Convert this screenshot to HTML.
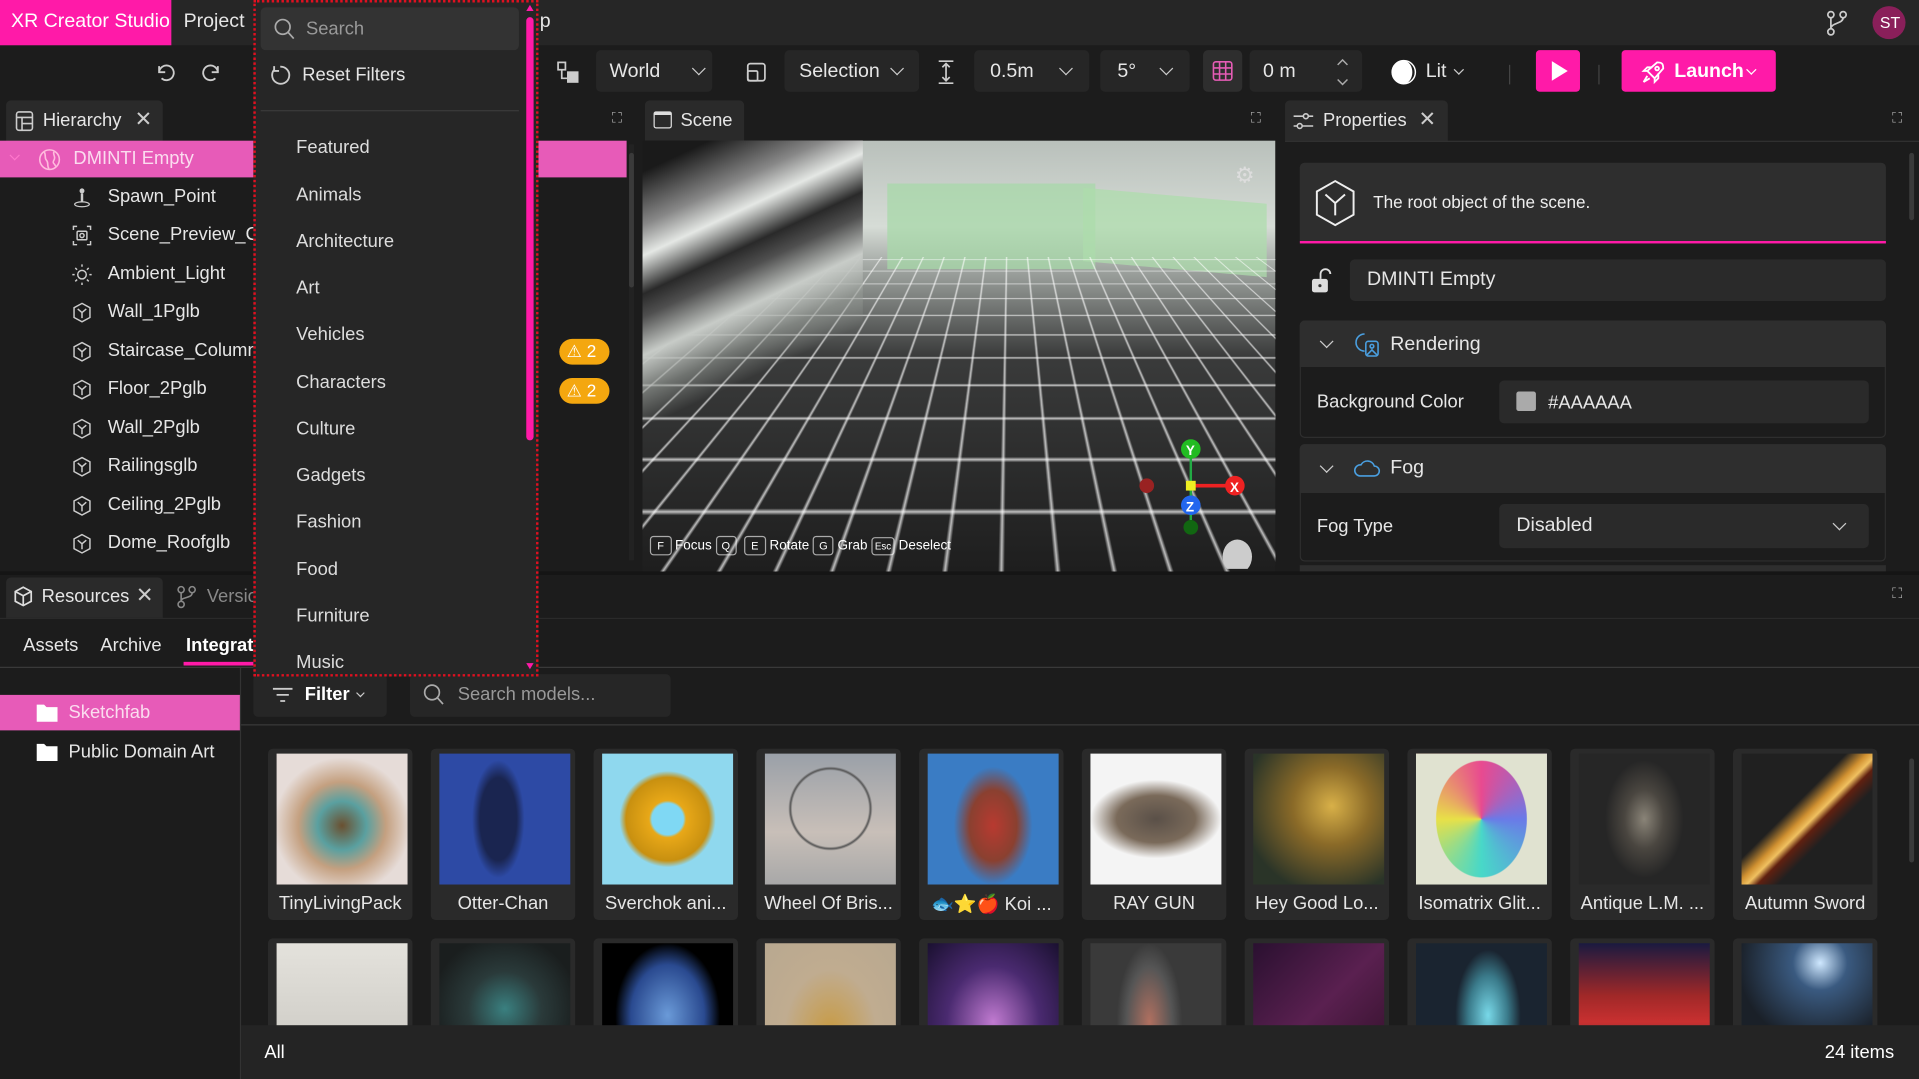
<!DOCTYPE html>
<html><head><meta charset="utf-8"><style>
*{box-sizing:border-box;margin:0;padding:0}
html,body{width:1919px;height:1079px;overflow:hidden;background:#1c1c1c}
#w{position:absolute;left:0;top:0;width:1568px;height:882px;transform:scale(1.22385,1.2234);transform-origin:0 0;font-family:"Liberation Sans",sans-serif;color:#e6e6e6;font-size:15px;background:#1c1c1c;overflow:hidden}
.a{position:absolute}
.box{position:absolute;background:#262626;border-radius:4px}
.t{position:absolute;white-space:nowrap}
.chev{position:absolute;width:8px;height:8px;border-right:1.5px solid #ccc;border-bottom:1.5px solid #ccc;transform:rotate(45deg)}
.row{position:absolute;left:0;height:31px;width:440px}
.row .t{left:88px;top:6px;font-size:15px}
.ic{position:absolute;left:59px;top:7px;width:16px;height:17px}
.card{position:absolute;width:118px;height:140px;background:#2a2a2a;border-radius:4px}
.card .img{position:absolute;left:7px;top:4px;width:107px;height:107px}
.card .t{left:0;width:118px;text-align:center;top:118px;font-size:15px}
.dd{position:absolute;left:242px;font-size:15px;color:#ddd}
</style></head><body><div id="w">
<div class="a" style="left:0;top:0;width:1568px;height:37px;background:#262626"></div>
<div class="a" style="left:0;top:0;width:140px;height:37px;background:#ff1aa8"></div>
<div class="t" style="left:9px;top:9px;font-size:16px;color:#fff">XR Creator Studio</div>
<div class="t" style="left:150px;top:9px;font-size:16px">Project</div>
<div class="t" style="left:441px;top:9px;font-size:16px">p</div>
<svg class="a" style="left:1491px;top:8px" width="20" height="22" viewBox="0 0 20 22" fill="none" stroke="#ccc" stroke-width="1.4"><circle cx="5" cy="4" r="2.5"/><circle cx="15" cy="4" r="2.5"/><circle cx="5" cy="18" r="2.5"/><path d="M5 6.5v9M15 6.5c0 5-10 4-10 9"/></svg>
<div class="a" style="left:1530px;top:5px;width:27px;height:27px;border-radius:50%;background:#8a1f5a"></div>
<div class="t" style="left:1536px;top:11px;font-size:13px;color:#fff">ST</div>
<svg class="a" style="left:126px;top:50px" width="60" height="18" fill="none" stroke="#ccc" stroke-width="1.5"><path d="M4 4v5h5M4 9a6 6 0 1 1 2 5"/><path d="M52 4v5h-5M52 9a6 6 0 1 0-2 5"/></svg>
<svg class="a" style="left:454px;top:49px" width="20" height="20" fill="none" stroke="#ccc" stroke-width="1.4"><rect x="2" y="2" width="6" height="6"/><rect x="10" y="10" width="8" height="8" fill="#ccc"/><path d="M5 8v7h5"/></svg>
<div class="box" style="left:487px;top:41px;width:95px;height:34px"></div><div class="t" style="left:498px;top:50px;font-size:16px">World</div><div class="chev" style="left:567px;top:52px"></div>
<svg class="a" style="left:608px;top:49px" width="20" height="20" fill="none" stroke="#ccc" stroke-width="1.4"><rect x="3" y="3" width="14" height="14" rx="2"/><rect x="3" y="9" width="8" height="8" rx="1"/></svg>
<div class="box" style="left:641px;top:41px;width:110px;height:34px"></div><div class="t" style="left:653px;top:50px;font-size:16px">Selection</div><div class="chev" style="left:729px;top:52px"></div>
<svg class="a" style="left:764px;top:48px" width="18" height="22" fill="none" stroke="#ccc" stroke-width="1.4"><path d="M3 2h12M3 20h12M9 4v14M6 7l3-3 3 3M6 15l3 3 3-3"/></svg>
<div class="box" style="left:796px;top:41px;width:94px;height:34px"></div><div class="t" style="left:809px;top:50px;font-size:16px">0.5m</div><div class="chev" style="left:867px;top:52px"></div>
<div class="box" style="left:899px;top:41px;width:73px;height:34px"></div><div class="t" style="left:913px;top:50px;font-size:16px">5°</div><div class="chev" style="left:949px;top:52px"></div>
<div class="box" style="left:983px;top:41px;width:32px;height:34px;background:#2e2e2e"></div>
<svg class="a" style="left:990px;top:49px" width="18" height="18" fill="none" stroke="#e55cb5" stroke-width="1.3"><rect x="1.5" y="1.5" width="15" height="15" rx="2"/><path d="M6.5 1.5v15M11.5 1.5v15M1.5 6.5h15M1.5 11.5h15"/></svg>
<div class="box" style="left:1021px;top:41px;width:92px;height:34px"></div><div class="t" style="left:1032px;top:50px;font-size:16px">0 m</div>
<svg class="a" style="left:1090px;top:46px" width="14" height="26" fill="none" stroke="#aaa" stroke-width="1.2"><path d="M3 7l4-4 4 4M3 19l4 4 4-4"/></svg>
<svg class="a" style="left:1136px;top:48px" width="22" height="22"><circle cx="11" cy="11" r="9.5" fill="#fff"/><path d="M11 1.5a9.5 9.5 0 0 1 0 19a7 9.5 0 0 0 0-19z" fill="#1c1c1c"/><circle cx="11" cy="11" r="9.5" fill="none" stroke="#fff" stroke-width="1.2"/></svg>
<div class="t" style="left:1165px;top:50px;font-size:16px">Lit</div><div class="chev" style="left:1189px;top:54px;width:6px;height:6px"></div>
<div class="a" style="left:1233px;top:53px;width:1px;height:16px;background:#444"></div>
<div class="a" style="left:1255px;top:41px;width:36px;height:34px;background:#ff1aa8;border-radius:3px"></div>
<svg class="a" style="left:1266px;top:49px" width="16" height="18"><path d="M2 1l13 8-13 8z" fill="#fff"/></svg>
<div class="a" style="left:1306px;top:53px;width:1px;height:16px;background:#444"></div>
<div class="a" style="left:1325px;top:41px;width:126px;height:34px;background:#ff1aa8;border-radius:3px"></div>
<svg class="a" style="left:1340px;top:48px" width="22" height="22" fill="none" stroke="#fff" stroke-width="1.5"><path d="M14 3c4 0 5 1 5 5l-7 8-6-6z"/><circle cx="14" cy="8" r="1.5"/><path d="M6 10l-3 0 3-3h4M12 16v3l3-3v-4M6 14l-3 5 5-3"/></svg>
<div class="t" style="left:1368px;top:50px;font-size:16px;color:#fff;font-weight:bold">Launch</div><div class="chev" style="left:1428px;top:54px;width:6px;height:6px;border-color:#fff"></div>
<div class="a" style="left:5px;top:82px;width:128px;height:33px;background:#2a2a2a;border-radius:4px 4px 0 0"></div>
<svg class="a" style="left:12px;top:90px" width="16" height="18" fill="none" stroke="#ccc" stroke-width="1.3"><rect x="1.5" y="1.5" width="13" height="15" rx="2"/><path d="M1.5 6h13M6 6v10.5M6 11h8.5"/></svg>
<div class="t" style="left:35px;top:90px;font-size:15px">Hierarchy</div>
<div class="t" style="left:110px;top:88px;font-size:17px;color:#ccc">✕</div>
<div class="t" style="left:500px;top:89px;font-size:12px;color:#aaa">⛶</div>
<div class="a" style="left:0;top:115px;width:512px;height:30px;background:#e75bb8"></div>
<div class="chev" style="left:9px;top:124px;width:6px;height:6px;border-color:#f7c"></div>
<svg class="a" style="left:31px;top:121px" width="19" height="19" fill="none" stroke="#fbd" stroke-width="1.3"><circle cx="9.5" cy="9.5" r="8"/><path d="M5 3c2 3 0 5 2 7s0 4 2 7M13 3c-1 3 2 4 0 7s2 3 1 5"/></svg>
<div class="t" style="left:60px;top:121px;font-size:15px;color:#fbdcef">DMINTI Empty</div>
<div class="row" style="top:146px"><svg class="ic" viewBox="0 0 16 17" fill="#ccc"><circle cx="8" cy="3" r="2"/><rect x="7" y="5" width="2" height="7"/><ellipse cx="8" cy="14" rx="6" ry="2" fill="none" stroke="#ccc"/></svg><div class="t">Spawn_Point</div></div>
<div class="row" style="top:177px"><svg class="ic" viewBox="0 0 16 17" fill="none" stroke="#ccc" stroke-width="1.2"><path d="M1 4V1h3M12 1h3v3M1 13v3h3M15 13v3h-3"/><rect x="4" y="5" width="8" height="7" rx="1"/><circle cx="8" cy="8.5" r="1.7"/></svg><div class="t">Scene_Preview_C</div></div>
<div class="row" style="top:209px"><svg class="ic" viewBox="0 0 16 17" fill="none" stroke="#ccc" stroke-width="1.2"><circle cx="8" cy="8.5" r="3.5"/><path d="M8 0v2M8 15v2M0 8.5h2M14 8.5h2M2.5 3l1.5 1.5M12 12.5l1.5 1.5M2.5 14l1.5-1.5M12 4.5l1.5-1.5"/></svg><div class="t">Ambient_Light</div></div>
<div class="row" style="top:240px"><svg class="ic" viewBox="0 0 16 17" fill="none" stroke="#ccc" stroke-width="1.2"><path d="M8 1l6.5 3.5v8L8 16l-6.5-3.5v-8z"/><path d="M4.5 5.5L8 8.5l3.5-3M8 8.5v4.5"/></svg><div class="t">Wall_1Pglb</div></div>
<div class="row" style="top:272px"><svg class="ic" viewBox="0 0 16 17" fill="none" stroke="#ccc" stroke-width="1.2"><path d="M8 1l6.5 3.5v8L8 16l-6.5-3.5v-8z"/><path d="M4.5 5.5L8 8.5l3.5-3M8 8.5v4.5"/></svg><div class="t">Staircase_Column</div></div>
<div class="row" style="top:303px"><svg class="ic" viewBox="0 0 16 17" fill="none" stroke="#ccc" stroke-width="1.2"><path d="M8 1l6.5 3.5v8L8 16l-6.5-3.5v-8z"/><path d="M4.5 5.5L8 8.5l3.5-3M8 8.5v4.5"/></svg><div class="t">Floor_2Pglb</div></div>
<div class="row" style="top:335px"><svg class="ic" viewBox="0 0 16 17" fill="none" stroke="#ccc" stroke-width="1.2"><path d="M8 1l6.5 3.5v8L8 16l-6.5-3.5v-8z"/><path d="M4.5 5.5L8 8.5l3.5-3M8 8.5v4.5"/></svg><div class="t">Wall_2Pglb</div></div>
<div class="row" style="top:366px"><svg class="ic" viewBox="0 0 16 17" fill="none" stroke="#ccc" stroke-width="1.2"><path d="M8 1l6.5 3.5v8L8 16l-6.5-3.5v-8z"/><path d="M4.5 5.5L8 8.5l3.5-3M8 8.5v4.5"/></svg><div class="t">Railingsglb</div></div>
<div class="row" style="top:398px"><svg class="ic" viewBox="0 0 16 17" fill="none" stroke="#ccc" stroke-width="1.2"><path d="M8 1l6.5 3.5v8L8 16l-6.5-3.5v-8z"/><path d="M4.5 5.5L8 8.5l3.5-3M8 8.5v4.5"/></svg><div class="t">Ceiling_2Pglb</div></div>
<div class="row" style="top:429px"><svg class="ic" viewBox="0 0 16 17" fill="none" stroke="#ccc" stroke-width="1.2"><path d="M8 1l6.5 3.5v8L8 16l-6.5-3.5v-8z"/><path d="M4.5 5.5L8 8.5l3.5-3M8 8.5v4.5"/></svg><div class="t">Dome_Roofglb</div></div>
<div class="a" style="left:514px;top:118px;width:4px;height:340px;background:#222"></div>
<div class="a" style="left:514px;top:125px;width:4px;height:110px;background:#3a3a3a;border-radius:2px"></div>
<div class="a" style="left:457px;top:277px;width:41px;height:21px;border-radius:11px;background:#f4a70f"></div><div class="t" style="left:463px;top:279px;font-size:14px;color:#fff">⚠ 2</div>
<div class="a" style="left:457px;top:309px;width:41px;height:21px;border-radius:11px;background:#f4a70f"></div><div class="t" style="left:463px;top:311px;font-size:14px;color:#fff">⚠ 2</div>
<div class="a" style="left:527px;top:82px;width:81px;height:33px;background:#2a2a2a;border-radius:4px 4px 0 0"></div>
<div class="a" style="left:534px;top:91px;width:15px;height:14px;border:1.5px solid #ddd;border-top-width:3px;border-radius:2px"></div>
<div class="t" style="left:556px;top:90px;font-size:15px">Scene</div>
<div class="t" style="left:1022px;top:89px;font-size:12px;color:#aaa">⛶</div>
<div class="a" style="left:525px;top:115px;width:517px;height:352px;overflow:hidden;background:linear-gradient(#b9c0bb 0%,#d6dcd6 20%,#9ea39f 30%,#3a3b3b 50%,#1e1e1e 100%)">
 <div class="a" style="left:200px;top:35px;width:170px;height:70px;background:#a7d8a8;opacity:.75"></div>
 <div class="a" style="left:360px;top:45px;width:150px;height:60px;background:#aedcac;transform:skewY(5deg);opacity:.75"></div>
 <div class="a" style="left:-400px;top:95px;width:1400px;height:600px;transform:perspective(260px) rotateX(60deg);transform-origin:50% 0;background-image:repeating-linear-gradient(90deg,rgba(255,255,255,.7) 0 1.3px,transparent 1.3px 17px),repeating-linear-gradient(0deg,rgba(255,255,255,.7) 0 1.3px,transparent 1.3px 17px)"></div>
 <div class="a" style="left:0;top:0;width:180px;height:230px;background:linear-gradient(155deg,#1a1a1a 8%,#888 22%,#e5e8e5 30%,#2a2a2a 40%,#505050 46%,#c8ccc8 56%,rgba(150,155,150,.6) 66%,transparent 75%)"></div>
 <div class="t" style="left:484px;top:18px;font-size:18px;color:#ddd">⚙</div>
 <svg class="a" style="left:400px;top:240px" width="100" height="110"><line x1="48" y1="42" x2="84" y2="42" stroke="#e22" stroke-width="3"/><line x1="48" y1="12" x2="48" y2="70" stroke="#2a4" stroke-width="2"/><circle cx="12" cy="42" r="6" fill="#922"/><circle cx="48" cy="12" r="8" fill="#2b2"/><circle cx="84" cy="42" r="8" fill="#e22"/><circle cx="48" cy="58" r="8" fill="#26e"/><circle cx="48" cy="76" r="6" fill="#161"/><rect x="44" y="38" width="8" height="8" fill="#ee2"/><text x="44" y="17" font-size="11" fill="#fff" font-family="Liberation Sans" font-weight="bold">Y</text><text x="80" y="47" font-size="11" fill="#fff" font-family="Liberation Sans" font-weight="bold">X</text><text x="44" y="63" font-size="11" fill="#fff" font-family="Liberation Sans" font-weight="bold">Z</text><ellipse cx="86" cy="100" rx="12" ry="14" fill="#ccc"/></svg>
 <div class="t" style="left:6px;top:325px;font-size:11px;color:#fff">
 <span style="border:1px solid #aaa;border-radius:3px;padding:2px 5px;font-size:9px">F</span> Focus <span style="border:1px solid #aaa;border-radius:3px;padding:2px 4px;font-size:9px">Q</span> &nbsp;<span style="border:1px solid #aaa;border-radius:3px;padding:2px 5px;font-size:9px">E</span> Rotate <span style="border:1px solid #aaa;border-radius:3px;padding:2px 4px;font-size:9px">G</span> Grab <span style="border:1px solid #aaa;border-radius:3px;padding:2px 2px;font-size:8px">Esc</span> Deselect</div>
</div>
<div class="a" style="left:1050px;top:82px;width:133px;height:33px;background:#2a2a2a;border-radius:4px 4px 0 0"></div>
<svg class="a" style="left:1056px;top:90px" width="18" height="18" fill="none" stroke="#ccc" stroke-width="1.3"><path d="M1 5h16M1 13h16"/><circle cx="11" cy="5" r="2" fill="#2a2a2a"/><circle cx="6" cy="13" r="2" fill="#2a2a2a"/></svg>
<div class="t" style="left:1081px;top:90px;font-size:15px">Properties</div>
<div class="t" style="left:1159px;top:88px;font-size:17px;color:#ccc">✕</div>
<div class="t" style="left:1546px;top:89px;font-size:12px;color:#aaa">⛶</div>
<div class="a" style="left:1050px;top:115px;width:518px;height:1px;background:#333"></div>
<div class="a" style="left:1062px;top:133px;width:479px;height:66px;background:#2e2e2e;border-radius:4px 4px 0 0;border-bottom:2px solid #ff1aa8"></div>
<svg class="a" style="left:1073px;top:146px" width="36" height="40" fill="none" stroke="#eee" stroke-width="1.6"><path d="M18 2l15 8.5v19L18 38 3 29.5v-19z"/><path d="M10 13l8 7 8-7M18 20v10"/></svg>
<div class="t" style="left:1122px;top:157px;font-size:14px;color:#eee">The root object of the scene.</div>
<svg class="a" style="left:1071px;top:219px" width="18" height="22"><path d="M8 9V5a4 4 0 0 1 8 0" fill="none" stroke="#ddd" stroke-width="1.5"/><rect x="1" y="9" width="13" height="11" rx="2" fill="#ddd"/><circle cx="7.5" cy="14.5" r="1.3" fill="#333"/></svg>
<div class="box" style="left:1103px;top:212px;width:438px;height:34px;background:#2a2a2a"></div>
<div class="t" style="left:1117px;top:220px;font-size:16px">DMINTI Empty</div>
<div class="a" style="left:1062px;top:262px;width:479px;height:96px;border:1px solid #2e2e2e;border-radius:4px"></div>
<div class="a" style="left:1062px;top:262px;width:479px;height:38px;background:#2e2e2e;border-radius:4px 4px 0 0"></div>
<div class="chev" style="left:1080px;top:275px"></div>
<svg class="a" style="left:1107px;top:271px" width="22" height="22" fill="none" stroke="#4a9fe0" stroke-width="1.3"><path d="M8 2a7 7 0 0 0 0 14"/><rect x="9" y="8" width="10" height="12" rx="2"/><circle cx="14" cy="12" r="1.5"/><path d="M10 19l4-4 4 4"/></svg>
<div class="t" style="left:1136px;top:273px;font-size:16px">Rendering</div>
<div class="t" style="left:1076px;top:320px;font-size:15px">Background Color</div>
<div class="box" style="left:1225px;top:311px;width:302px;height:35px;background:#2a2a2a"></div>
<div class="a" style="left:1239px;top:320px;width:16px;height:16px;background:#aaa;border-radius:2px"></div>
<div class="t" style="left:1265px;top:321px;font-size:15px">#AAAAAA</div>
<div class="a" style="left:1062px;top:363px;width:479px;height:96px;border:1px solid #2e2e2e;border-radius:4px"></div>
<div class="a" style="left:1062px;top:363px;width:479px;height:40px;background:#2e2e2e;border-radius:4px 4px 0 0"></div>
<div class="chev" style="left:1080px;top:377px"></div>
<svg class="a" style="left:1106px;top:373px" width="22" height="18" fill="none" stroke="#4a9fe0" stroke-width="1.3"><path d="M5 16h12a4 4 0 0 0 0-8 6 6 0 0 0-11-1 4.5 4.5 0 0 0-1 9z"/></svg>
<div class="t" style="left:1136px;top:374px;font-size:16px">Fog</div>
<div class="t" style="left:1076px;top:422px;font-size:15px">Fog Type</div>
<div class="box" style="left:1225px;top:412px;width:302px;height:36px;background:#2a2a2a"></div>
<div class="t" style="left:1239px;top:421px;font-size:16px">Disabled</div>
<div class="chev" style="left:1499px;top:424px"></div>
<div class="a" style="left:1062px;top:462px;width:479px;height:5px;background:#2e2e2e"></div>
<div class="a" style="left:1560px;top:125px;width:4px;height:55px;background:#3a3a3a;border-radius:2px"></div>
<div class="a" style="left:0;top:467px;width:1568px;height:3px;background:#151515"></div>
<div class="a" style="left:5px;top:472px;width:128px;height:33px;background:#2a2a2a;border-radius:4px 4px 0 0"></div>
<svg class="a" style="left:11px;top:479px" width="16" height="18" fill="none" stroke="#ddd" stroke-width="1.4"><path d="M8 1l6.5 3.5v8L8 16l-6.5-3.5v-8z"/><path d="M1.5 4.5L8 8l6.5-3.5M8 8v8"/></svg>
<div class="t" style="left:34px;top:479px;font-size:15px">Resources</div>
<div class="t" style="left:111px;top:477px;font-size:17px;color:#ccc">✕</div>
<svg class="a" style="left:144px;top:478px" width="18" height="20" fill="none" stroke="#888" stroke-width="1.3"><circle cx="4" cy="4" r="2.5"/><circle cx="13" cy="4" r="2.5"/><circle cx="4" cy="16" r="2.5"/><path d="M4 6.5v7M13 6.5c0 5-9 3-9 7"/></svg>
<div class="t" style="left:169px;top:479px;font-size:15px;color:#888">Versio</div>
<div class="t" style="left:1546px;top:478px;font-size:12px;color:#aaa">⛶</div>
<div class="a" style="left:0;top:505px;width:1568px;height:1px;background:#2a2a2a"></div>
<div class="t" style="left:19px;top:519px;font-size:15px">Assets</div>
<div class="t" style="left:82px;top:519px;font-size:15px">Archive</div>
<div class="t" style="left:152px;top:519px;font-size:15px;font-weight:bold;color:#fff">Integrations</div>
<div class="a" style="left:150px;top:541px;width:60px;height:3px;background:#ff1aa8"></div>
<div class="a" style="left:0;top:545px;width:1568px;height:1px;background:#3a3a3a"></div>
<div class="a" style="left:196px;top:546px;width:1px;height:336px;background:#333"></div>
<div class="a" style="left:0;top:568px;width:196px;height:29px;background:#e75bb8"></div>
<svg class="a" style="left:29px;top:574px" width="19" height="17"><path d="M1 2h6l2 2h9v12H1z" fill="#fff"/></svg>
<div class="t" style="left:56px;top:574px;font-size:15px;color:#fbdcef">Sketchfab</div>
<svg class="a" style="left:29px;top:606px" width="19" height="17"><path d="M1 2h6l2 2h9v12H1z" fill="#fff"/></svg>
<div class="t" style="left:56px;top:606px;font-size:15px">Public Domain Art</div>
<div class="box" style="left:207px;top:551px;width:109px;height:35px"></div>
<svg class="a" style="left:222px;top:561px" width="18" height="14" stroke="#ccc" stroke-width="1.5"><path d="M1 2h16M4 7h10M7 12h4"/></svg>
<div class="t" style="left:249px;top:559px;font-size:15px;font-weight:bold;color:#fff">Filter</div><div class="chev" style="left:292px;top:564px;width:5px;height:5px"></div>
<div class="box" style="left:335px;top:551px;width:213px;height:35px"></div>
<svg class="a" style="left:345px;top:558px" width="18" height="20" fill="none" stroke="#aaa" stroke-width="1.4"><circle cx="8" cy="8" r="6"/><path d="M12.5 12.5l4.5 5"/></svg>
<div class="t" style="left:374px;top:559px;font-size:15px;color:#999">Search models...</div>
<div class="a" style="left:197px;top:592px;width:1371px;height:1px;background:#3a3a3a"></div>
<div class="card" style="left:219px;top:612px"><div class="img" style="background:radial-gradient(circle at 50% 55%,#6a5030 0,#5aa0a0 25%,#c4a080 45%,#e6dcd8 70%)"></div><div class="t">TinyLivingPack</div></div>
<div class="card" style="left:352px;top:612px"><div class="img" style="background:radial-gradient(ellipse 20% 45% at 45% 50%,#1a2550 0,#1a2550 70%,#2d4aa5 100%)"></div><div class="t">Otter-Chan</div></div>
<div class="card" style="left:485px;top:612px"><div class="img" style="background:radial-gradient(circle,#7fd8f4 0,#7fd8f4 17%,#e8a818 20%,#c89010 45%,#8fd8ee 52%)"></div><div class="t">Sverchok ani...</div></div>
<div class="card" style="left:618px;top:612px"><div class="img" style="background:radial-gradient(circle at 50% 42%,transparent 0,transparent 38%,#555 40%,transparent 42%),linear-gradient(#9aa0a8,#c8bfb8 60%,#a8a8a8)"></div><div class="t">Wheel Of Bris...</div></div>
<div class="card" style="left:751px;top:612px"><div class="img" style="background:radial-gradient(ellipse 30% 45% at 50% 55%,#b83a30 0,#8a4030 60%,#3a7cc4 100%)"></div><div class="t">🐟⭐🍎 Koi ...</div></div>
<div class="card" style="left:884px;top:612px"><div class="img" style="background:radial-gradient(ellipse 50% 30% at 50% 50%,#5a5048 0,#7a6a5a 60%,#f4f4f4 100%)"></div><div class="t">RAY GUN</div></div>
<div class="card" style="left:1017px;top:612px"><div class="img" style="background:radial-gradient(ellipse at 60% 40%,#d8b048 0,#8a6a28 35%,#2a3428 80%)"></div><div class="t">Hey Good Lo...</div></div>
<div class="card" style="left:1150px;top:612px"><div class="img" style="background:conic-gradient(from 0deg at 50% 50%,#e84a90,#6a7ae8,#48d8c8,#e8e048,#e84a90)"></div><div class="a" style="left:7px;top:4px;width:107px;height:107px;background:radial-gradient(ellipse 35% 45% at 50% 50%,transparent 0,transparent 98%,#e0e2d0 100%)"></div><div class="t">Isomatrix Glit...</div></div>
<div class="card" style="left:1283px;top:612px"><div class="img" style="background:radial-gradient(ellipse 30% 45% at 50% 50%,#8a8478 0,#4a4640 50%,#262626 100%)"></div><div class="t">Antique L.M. ...</div></div>
<div class="card" style="left:1416px;top:612px"><div class="img" style="background:linear-gradient(135deg,#202020 0,#202020 40%,#d09030 48%,#f0c060 52%,#602010 56%,#202020 64%)"></div><div class="t">Autumn Sword</div></div>
<div class="card" style="left:219px;top:767px"><div class="img" style="background:linear-gradient(#e4e2dc,#c8c6c0)"></div></div>
<div class="card" style="left:352px;top:767px"><div class="img" style="background:radial-gradient(ellipse at 50% 50%,#3a8080 0,#2a3a3a 40%,#1a1e1e 80%)"></div></div>
<div class="card" style="left:485px;top:767px"><div class="img" style="background:radial-gradient(ellipse 40% 55% at 50% 55%,#6a9ad8 0,#2a4a90 70%,#000 100%)"></div></div>
<div class="card" style="left:618px;top:767px"><div class="img" style="background:radial-gradient(ellipse at 50% 70%,#c89a40 0,#c0ac90 50%,#b8a890 100%)"></div></div>
<div class="card" style="left:751px;top:767px"><div class="img" style="background:radial-gradient(ellipse at 50% 60%,#c07ad0 0,#4a2a70 50%,#1a1030 100%)"></div></div>
<div class="card" style="left:884px;top:767px"><div class="img" style="background:radial-gradient(ellipse 25% 60% at 45% 60%,#b07060 0,#555 70%,#3a3a3a 100%)"></div></div>
<div class="card" style="left:1017px;top:767px"><div class="img" style="background:linear-gradient(135deg,#2a1030,#5a2050 50%,#301028)"></div></div>
<div class="card" style="left:1150px;top:767px"><div class="img" style="background:radial-gradient(ellipse 25% 50% at 55% 55%,#78d8e8 0,#3a7a8a 60%,#1a2430 100%)"></div></div>
<div class="card" style="left:1283px;top:767px"><div class="img" style="background:linear-gradient(#1a1a40,#a02828 40%,#c83030 60%,#203040)"></div></div>
<div class="card" style="left:1416px;top:767px"><div class="img" style="background:radial-gradient(circle at 60% 15%,#cfe8ff 0,#3a5a80 20%,#1a2028 60%)"></div></div>
<div class="a" style="left:1560px;top:620px;width:4px;height:85px;background:#3a3a3a;border-radius:2px"></div>
<div class="a" style="left:197px;top:838px;width:1371px;height:44px;background:#242424"></div>
<div class="t" style="left:216px;top:852px;font-size:15px;color:#fff">All</div>
<div class="t" style="left:1491px;top:852px;font-size:15px;color:#fff">24 items</div>
<div class="a" style="left:207px;top:0;width:233px;height:553px;background:#262626;border:2px dotted #e01020"></div>
<div class="box" style="left:213px;top:6px;width:211px;height:35px;background:#333"></div>
<svg class="a" style="left:223px;top:14px" width="18" height="20" fill="none" stroke="#aaa" stroke-width="1.4"><circle cx="8" cy="8" r="6"/><path d="M12.5 12.5l4.5 5"/></svg>
<div class="t" style="left:250px;top:15px;font-size:15px;color:#999">Search</div>
<svg class="a" style="left:220px;top:52px" width="18" height="20" fill="none" stroke="#ccc" stroke-width="1.5"><path d="M4 5a7 7 0 1 0 5-2.5M4 2v4h4"/></svg>
<div class="t" style="left:247px;top:53px;font-size:15px">Reset Filters</div>
<div class="a" style="left:213px;top:90px;width:211px;height:1px;background:#3a3a3a"></div>
<div class="t dd" style="top:112px">Featured</div>
<div class="t dd" style="top:151px">Animals</div>
<div class="t dd" style="top:189px">Architecture</div>
<div class="t dd" style="top:227px">Art</div>
<div class="t dd" style="top:265px">Vehicles</div>
<div class="t dd" style="top:304px">Characters</div>
<div class="t dd" style="top:342px">Culture</div>
<div class="t dd" style="top:380px">Gadgets</div>
<div class="t dd" style="top:418px">Fashion</div>
<div class="t dd" style="top:457px">Food</div>
<div class="t dd" style="top:495px">Furniture</div>
<div class="t dd" style="top:533px">Music</div>
<div class="a" style="left:430px;top:14px;width:6px;height:346px;background:#ff1aa8;border-radius:3px"></div>
<div class="a" style="left:430px;top:4px;width:0;height:0;border:3px solid transparent;border-bottom:5px solid #ff1aa8;border-top:0"></div>
<div class="a" style="left:430px;top:542px;width:0;height:0;border:3px solid transparent;border-top:5px solid #ff1aa8;border-bottom:0"></div>
</div></body></html>
